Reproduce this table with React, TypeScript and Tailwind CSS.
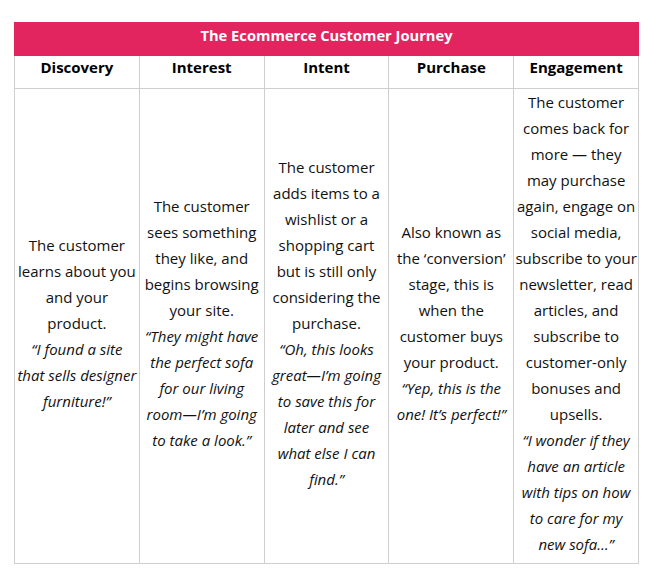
import React from "react";

const cols = [
  {
    h: "Discovery",
    t: ["The customer", "learns about you", "and your", "product."],
    q: ["“I found a site", "that sells designer", "furniture!”"],
  },
  {
    h: "Interest",
    t: ["The customer", "sees something", "they like, and", "begins browsing", "your site."],
    q: ["“They might have", "the perfect sofa", "for our living", "room—I’m going", "to take a look.”"],
  },
  {
    h: "Intent",
    t: [
      "The customer",
      "adds items to a",
      "wishlist or a",
      "shopping cart",
      "but is still only",
      "considering the",
      "purchase.",
    ],
    q: ["“Oh, this looks", "great—I’m going", "to save this for", "later and see", "what else I can", "find.”"],
  },
  {
    h: "Purchase",
    t: ["Also known as", "the ‘conversion’", "stage, this is", "when the", "customer buys", "your product."],
    q: ["“Yep, this is the", "one! It’s perfect!”"],
  },
  {
    h: "Engagement",
    t: [
      "The customer",
      "comes back for",
      "more — they",
      "may purchase",
      "again, engage on",
      "social media,",
      "subscribe to your",
      "newsletter, read",
      "articles, and",
      "subscribe to",
      "customer-only",
      "bonuses and",
      "upsells.",
    ],
    q: ["“I wonder if they", "have an article", "with tips on how", "to care for my", "new sofa…”"],
  },
];

export default function App() {
  return (
    <div
      className="w-[656px] h-[582px] bg-white pt-[22px] pl-[14px]"
      style={{ fontFamily: '"Open Sans", sans-serif' }}
    >
      <table className="w-[625px] border-collapse table-fixed text-[#111]">
        <thead>
          <tr>
            <th
              colSpan={5}
              className="bg-[#e2245f] text-white font-bold text-[14.7px] leading-[20px] h-[33px] border border-[#e2245f] pt-0 pb-[8px] px-0"
            >
              The Ecommerce Customer Journey
            </th>
          </tr>
          <tr>
            {cols.map((c) => (
              <th
                key={c.h}
                className="border border-[#cfcfcf] font-bold text-[15px] leading-[20px] h-[33px] pt-0 pb-[10px] px-0 text-black"
              >
                {c.h}
              </th>
            ))}
          </tr>
        </thead>
        <tbody>
          <tr>
            {cols.map((c) => (
              <td
                key={c.h}
                className="border border-[#cfcfcf] align-middle text-center text-[15px] leading-[26px] px-0 pt-0 pb-[6px] h-[473px] whitespace-nowrap"
              >
                {c.t.map((l, i) => (
                  <div key={"t" + i}>{l}</div>
                ))}
                {c.q.map((l, i) => (
                  <div key={"q" + i} className="italic">
                    {l}
                  </div>
                ))}
              </td>
            ))}
          </tr>
        </tbody>
      </table>
    </div>
  );
}
